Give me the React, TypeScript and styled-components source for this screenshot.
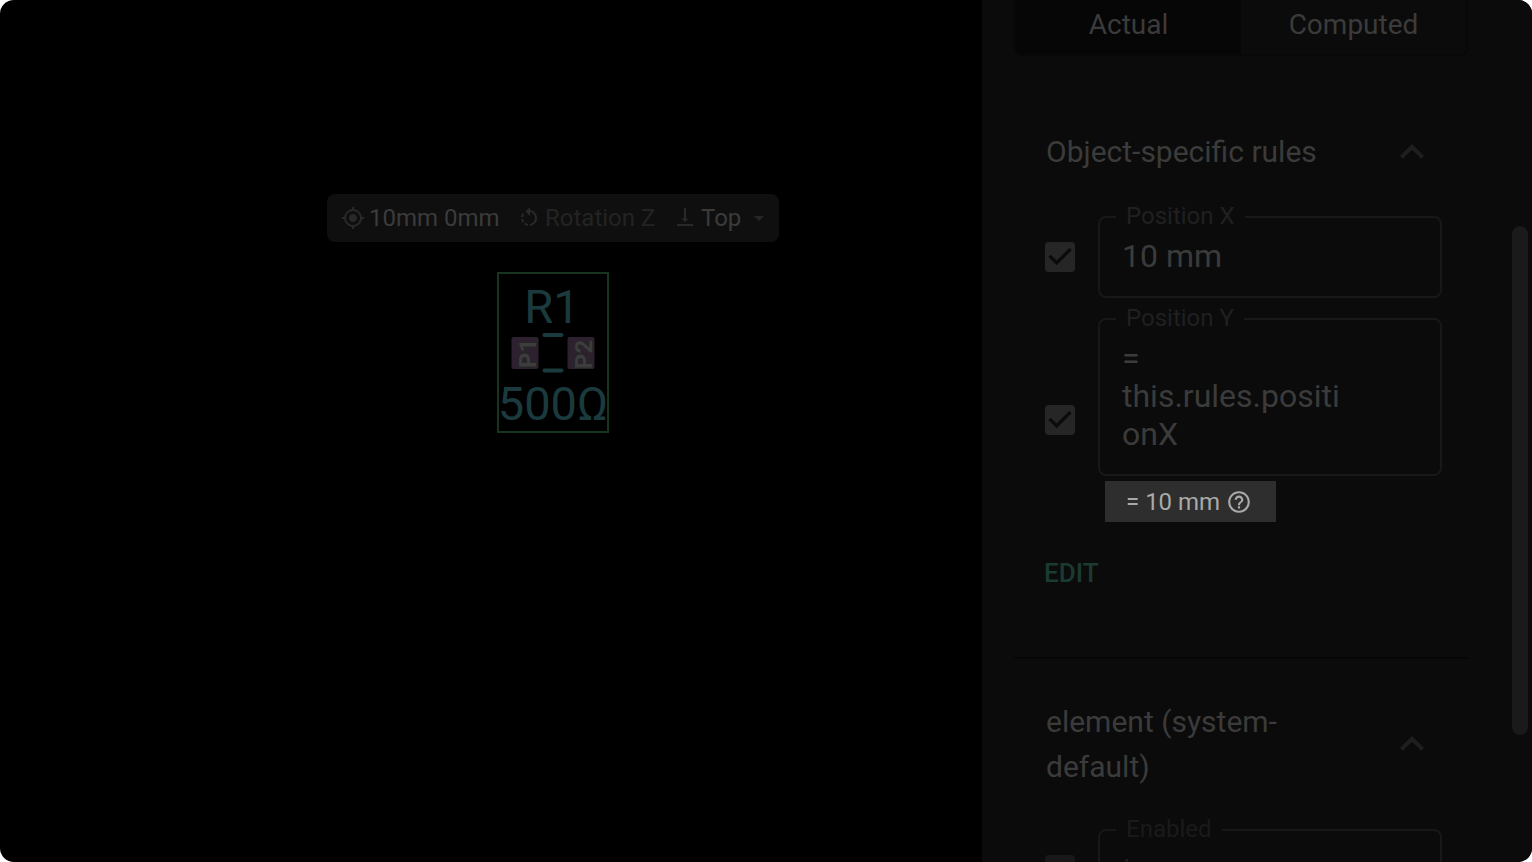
import React, { useId } from "react";
import styled, { createGlobalStyle } from "styled-components";
import {
  MdArrowDropDown,
  MdHelpOutline,
  MdKeyboardArrowUp,
  MdMyLocation,
  MdRotateLeft,
} from "react-icons/md";

const color = {
  panel: "#0b0b0b",
  sunken: "#060606",
  text: "#3b3b3b",
  label: "#202020",
  line: "#181818",
  silk: "#1b3a3d",
  accent: "#1b3a30",
};

const GlobalStyle = createGlobalStyle`
  *, *::before, *::after { box-sizing: border-box; }
  body { margin: 0; background: #fff; }
  button, input, textarea, select {
    font: inherit;
    color: inherit;
    background: none;
    border: 0;
    margin: 0;
    padding: 0;
    outline: none;
  }
`;

const Window = styled.div`
  display: flex;
  height: 100vh;
  overflow: hidden;
  border-radius: 14px;
  background: #000;
  color: ${color.text};
  font-family: Roboto, "Liberation Sans", sans-serif;
`;

const Canvas = styled.main`
  position: relative;
  flex: 1;
  min-width: 0;
`;

const PlacedPart = styled.div`
  position: absolute;
  left: 327px;
  top: 194px;
  display: flex;
  flex-direction: column;
  align-items: center;
  gap: 30px;
`;

const Toolbar = styled.div`
  display: flex;
  align-items: center;
  width: 452px;
  height: 48px;
  padding: 0 8px 0 14px;
  border-radius: 8px;
  background: #0f0f0f;
  font-size: 24px;
  line-height: 28px;
`;

const ToolIcon = styled.span`
  display: flex;
  flex: none;
  margin-right: 4px;
  color: #292929;
`;

const ToolInput = styled.input<{ $width: number }>`
  width: ${(p) => p.$width}px;
  &::placeholder {
    color: #232323;
    opacity: 1;
  }
`;

const SideSelect = styled.select`
  appearance: none;
  width: 46px;
`;

const SelectArrow = styled.span`
  display: flex;
  color: #262626;
`;

const Panel = styled.aside`
  position: relative;
  width: 550px;
  flex: none;
  overflow: hidden;
  padding: 0 64px 0 32px;
  background: ${color.panel};
`;

const Tabs = styled.div`
  display: flex;
  height: 56px;
  border: 2px solid #080808;
  border-top: 0;
  border-radius: 0 0 8px 8px;
  overflow: hidden;
`;

const Tab = styled.button<{ $active?: boolean }>`
  flex: 1;
  padding-bottom: 5px;
  background: ${(p) => (p.$active ? color.sunken : "transparent")};
  font-size: 28px;
`;

const Section = styled.section<{ $dim?: boolean }>`
  padding: 0 26px 0 31px;
  --field-text: ${(p) => (p.$dim ? "#1e1e1e" : color.text)};
  --check: ${(p) => (p.$dim ? "#181818" : "#262626")};
  --label: ${(p) => (p.$dim ? "#1a1a1a" : color.label)};
`;

const SectionHeader = styled.header<{ $top: number; $bottom: number }>`
  display: flex;
  align-items: center;
  justify-content: space-between;
  padding: ${(p) => p.$top}px 6px ${(p) => p.$bottom}px 1px;
`;

const SectionTitle = styled.h2`
  margin: 0;
  max-width: 290px;
  font-size: 30px;
  font-weight: 400;
  line-height: 45px;
`;

const Collapse = styled.button`
  display: flex;
  align-items: center;
  height: 44px;
  color: #1f1f1f;
`;

const Rules = styled.div`
  display: flex;
  flex-direction: column;
  gap: 8px;
`;

const RuleRow = styled.div`
  display: flex;
  align-items: center;
  gap: 23px;
`;

const CheckCell = styled.span`
  display: grid;
  flex: none;
  width: 30px;
  padding-top: 12px;
  color: var(--check);
  > * {
    grid-area: 1 / 1;
    width: 30px;
    height: 30px;
  }
`;

const CheckInput = styled.input`
  appearance: none;
`;

const CheckMark = styled.svg`
  pointer-events: none;
`;

const RuleBody = styled.div`
  flex: 1;
  min-width: 0;
`;

const Outline = styled.fieldset`
  min-width: 0;
  margin: 0;
  padding: 7px 22px 21px;
  border: 2px solid ${color.line};
  border-radius: 8px;
`;

const Legend = styled.legend`
  margin-left: -6px;
  padding: 0 10px 2px;
  color: var(--label);
  font-size: 24px;
  line-height: 24px;
`;

const ValueArea = styled.textarea`
  display: block;
  width: 230px;
  overflow: hidden;
  resize: none;
  color: var(--field-text);
  font-size: 32px;
  line-height: 38px;
`;

const Result = styled.output`
  display: flex;
  align-items: center;
  gap: 6px;
  width: fit-content;
  height: 41px;
  margin: 5px 0 0 7px;
  padding: 1px 24px 0 21px;
  background: #2e2e2e;
  color: #a9a9a9;
  font-size: 24px;
  line-height: 32px;
`;

const EditButton = styled.button`
  display: block;
  margin: 36px 0 69px -1px;
  color: ${color.accent};
  font-size: 26px;
  font-weight: 500;
  line-height: 30px;
`;

const Divider = styled.hr`
  height: 2px;
  margin: 0;
  border: 0;
  background: #060606;
`;

const ScrollThumb = styled.div`
  position: absolute;
  top: 226px;
  right: 4px;
  width: 16px;
  height: 509px;
  border-radius: 8px;
  background: #1a1a1a;
`;

const PadText = styled.text`
  font-size: 24px;
  font-weight: 700;
  fill: #3d3d3d;
  stroke: #262626;
  stroke-width: 2px;
  paint-order: stroke;
`;

const SilkText = styled.text`
  font-size: 47px;
  fill: ${color.silk};
  text-anchor: middle;
`;

function Resistor() {
  return (
    <svg width="112" height="161" viewBox="0 0 112 161" role="img" aria-label="Resistor R1">
      <rect x="1" y="1" width="110" height="159" fill="none" stroke="#16341f" strokeWidth="2" />
      <SilkText x="55" y="51">R1</SilkText>
      <rect x="14.500" y="65" width="27" height="32" rx="2" fill="#2d2130" />
      <rect x="70.500" y="65" width="27" height="32" rx="2" fill="#2d2130" />
      <PadText transform="translate(39 96) rotate(-90)">P1</PadText>
      <PadText transform="translate(95 97) rotate(-90)">P2</PadText>
      <path d="M47.500 63H64.500M47.500 98.500H64.500" stroke={color.silk} strokeWidth="4" strokeLinecap="round" />
      <SilkText x="56" y="148">500Ω</SilkText>
    </svg>
  );
}

function AlignBottomIcon() {
  return (
    <svg width="24" height="24" viewBox="0 0 24 24" fill="currentColor" aria-hidden="true">
      <path d="M11 2h2v10.500h2.500L12 16l-3.500-3.500H11zM4 18h16v2H4z" />
    </svg>
  );
}

type RuleProps = { label: string; value: string; rows?: number; result?: string };

function Rule({ label, value, rows = 1, result }: RuleProps) {
  const id = useId();
  return (
    <RuleRow>
      <CheckCell>
        <CheckInput type="checkbox" defaultChecked aria-label={`Use ${label}`} />
        <CheckMark viewBox="3 3 18 18" fill="currentColor" aria-hidden="true">
          <path d="M19 3H5c-1.110 0-2 .9-2 2v14c0 1.100.89 2 2 2h14c1.110 0 2-.9 2-2V5c0-1.100-.89-2-2-2zm-9 14l-5-5 1.410-1.410L10 14.170l7.590-7.590L19 8l-9 9z" />
        </CheckMark>
      </CheckCell>
      <RuleBody>
        <Outline>
          <Legend>
            <label htmlFor={id}>{label}</label>
          </Legend>
          <ValueArea id={id} rows={rows} defaultValue={value} spellCheck={false} />
        </Outline>
        {result && (
          <Result htmlFor={id}>
            {result}
            <MdHelpOutline size={26} />
          </Result>
        )}
      </RuleBody>
    </RuleRow>
  );
}

export default function App() {
  return (
    <>
      <GlobalStyle />
      <Window>
        <Canvas>
          <PlacedPart>
            <Toolbar>
              <ToolIcon><MdMyLocation size={24} /></ToolIcon>
              <ToolInput $width={148} aria-label="Position" defaultValue="10mm 0mm" />
              <ToolIcon><MdRotateLeft size={24} /></ToolIcon>
              <ToolInput $width={128} aria-label="Rotation" placeholder="Rotation Z" />
              <ToolIcon><AlignBottomIcon /></ToolIcon>
              <SideSelect aria-label="Side" defaultValue="Top">
                <option>Top</option>
                <option>Bottom</option>
              </SideSelect>
              <SelectArrow><MdArrowDropDown size={24} /></SelectArrow>
            </Toolbar>
            <Resistor />
          </PlacedPart>
        </Canvas>
        <Panel>
          <Tabs role="tablist">
            <Tab role="tab" aria-selected="true" $active>Actual</Tab>
            <Tab role="tab" aria-selected="false">Computed</Tab>
          </Tabs>
          <Section>
            <SectionHeader $top={73} $bottom={30}>
              <SectionTitle>Object-specific rules</SectionTitle>
              <Collapse aria-label="Collapse object-specific rules">
                <MdKeyboardArrowUp size={48} />
              </Collapse>
            </SectionHeader>
            <Rules>
              <Rule label="Position X" value="10 mm" />
              <Rule label="Position Y" value="= this.rules.positionX" rows={3} result="= 10 mm" />
            </Rules>
            <EditButton>EDIT</EditButton>
          </Section>
          <Divider />
          <Section $dim>
            <SectionHeader $top={40} $bottom={28}>
              <SectionTitle>element (system-default)</SectionTitle>
              <Collapse aria-label="Collapse element rules">
                <MdKeyboardArrowUp size={48} />
              </Collapse>
            </SectionHeader>
            <Rules>
              <Rule label="Enabled" value="true" />
            </Rules>
          </Section>
          <ScrollThumb />
        </Panel>
      </Window>
    </>
  );
}
